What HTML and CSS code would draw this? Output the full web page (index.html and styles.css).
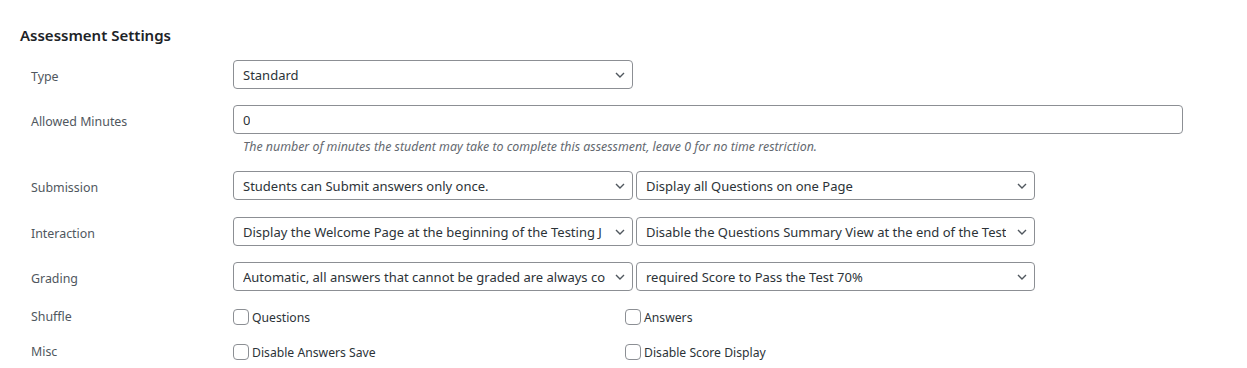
FILE: index.html
```html
<!DOCTYPE html>
<html>
<head>
<meta charset="utf-8">
<link rel="stylesheet" href="styles.css">
</head>
<body>
<div class="page">
  <h2 class="section-title">Assessment Settings</h2>
  <div class="settings">
    <div class="row row-type">
      <div class="label">Type</div>
      <div class="field">
        <div class="select w400"><span class="value">Standard</span><svg class="chev" viewBox="0 0 10 6"><path d="M1 1l4 4 4-4" fill="none" stroke="#50575e" stroke-width="1.4"/></svg></div>
      </div>
    </div>
    <div class="row row-minutes">
      <div class="label">Allowed Minutes</div>
      <div class="field col">
        <div class="input"><span class="value">0</span></div>
        <p class="help">The number of minutes the student may take to complete this assessment, leave 0 for no time restriction.</p>
      </div>
    </div>
    <div class="row row-submission">
      <div class="label">Submission</div>
      <div class="field pair">
        <div class="select w400"><span class="value">Students can Submit answers only once.</span><svg class="chev" viewBox="0 0 10 6"><path d="M1 1l4 4 4-4" fill="none" stroke="#50575e" stroke-width="1.4"/></svg></div>
        <div class="select w399"><span class="value">Display all Questions on one Page</span><svg class="chev" viewBox="0 0 10 6"><path d="M1 1l4 4 4-4" fill="none" stroke="#50575e" stroke-width="1.4"/></svg></div>
      </div>
    </div>
    <div class="row row-interaction">
      <div class="label">Interaction</div>
      <div class="field pair">
        <div class="select w400"><span class="value">Display the Welcome Page at the beginning of the Testing J</span><svg class="chev" viewBox="0 0 10 6"><path d="M1 1l4 4 4-4" fill="none" stroke="#50575e" stroke-width="1.4"/></svg></div>
        <div class="select w399"><span class="value">Disable the Questions Summary View at the end of the Test</span><svg class="chev" viewBox="0 0 10 6"><path d="M1 1l4 4 4-4" fill="none" stroke="#50575e" stroke-width="1.4"/></svg></div>
      </div>
    </div>
    <div class="row row-grading">
      <div class="label">Grading</div>
      <div class="field pair">
        <div class="select w400"><span class="value">Automatic, all answers that cannot be graded are always co</span><svg class="chev" viewBox="0 0 10 6"><path d="M1 1l4 4 4-4" fill="none" stroke="#50575e" stroke-width="1.4"/></svg></div>
        <div class="select w399"><span class="value">required Score to Pass the Test 70%</span><svg class="chev" viewBox="0 0 10 6"><path d="M1 1l4 4 4-4" fill="none" stroke="#50575e" stroke-width="1.4"/></svg></div>
      </div>
    </div>
    <div class="row row-check">
      <div class="label">Shuffle</div>
      <div class="field checks">
        <label class="check"><span class="box"></span>Questions</label>
        <label class="check"><span class="box"></span>Answers</label>
      </div>
    </div>
    <div class="row row-check">
      <div class="label">Misc</div>
      <div class="field checks">
        <label class="check"><span class="box"></span>Disable Answers Save</label>
        <label class="check"><span class="box"></span>Disable Score Display</label>
      </div>
    </div>
  </div>
</div>
</body>
</html>
```
FILE: styles.css
```css
* { box-sizing: border-box; }
html, body { margin: 0; padding: 0; background: #ffffff; }
body {
  font-family: "Noto Sans", "Open Sans", sans-serif;
  color: #2c3338;
  font-size: 12px;
}
.page { padding: 24px 0 0 20px; }
.section-title {
  margin: 0 0 14px 0;
  font-size: 15px;
  font-weight: 600;
  color: #1d2327;
  line-height: 22px;
}
.settings { display: flex; flex-direction: column; padding-left: 11px; }
.row { display: flex; align-items: flex-start; margin-bottom: 15px; }
.label {
  width: 202px;
  flex: none;
  font-size: 12.4px;
  color: #50575e;
  line-height: 29px;
  padding-top: 2px;
}
.field { display: flex; }
.field.col { flex-direction: column; }
.field.pair { gap: 3px; }
.select, .input {
  position: relative;
  height: 29px;
  border: 1px solid #8c8f94;
  border-radius: 4px;
  background: #fff;
  display: flex;
  align-items: center;
  padding: 0 16px 0 9px;
  overflow: hidden;
}
.select.w400 { width: 400px; }
.select.w399 { width: 399px; }
.input { width: 950px; }
.value { white-space: nowrap; overflow: hidden; font-size: 13px; color: #2c3338; }
.chev {
  position: absolute;
  right: 7px;
  top: 11px;
  width: 10px;
  height: 6px;
}
.help {
  margin: 5px 0 0 10px;
  font-size: 12.4px;
  font-style: italic;
  color: #646970;
  line-height: 16px;
}
.row-type { margin-bottom: 14px; }
.row-minutes { margin-bottom: 16px; }
.row-submission { margin-bottom: 15px; }
.row-interaction { margin-bottom: 14px; }
.row-grading { margin-bottom: 12px; }
.row-check { margin-bottom: 11px; height: 24px; align-items: center; }
.row-check .label { line-height: 24px; padding-top: 0; }
.checks { display: grid; grid-template-columns: 392px 392px; }
.check {
  display: flex;
  align-items: center;
  gap: 3px;
  font-size: 12.2px;
  color: #2c3338;
}
.box {
  width: 16px;
  height: 16px;
  border: 1px solid #8c8f94;
  border-radius: 4px;
  background: #fff;
}
```
